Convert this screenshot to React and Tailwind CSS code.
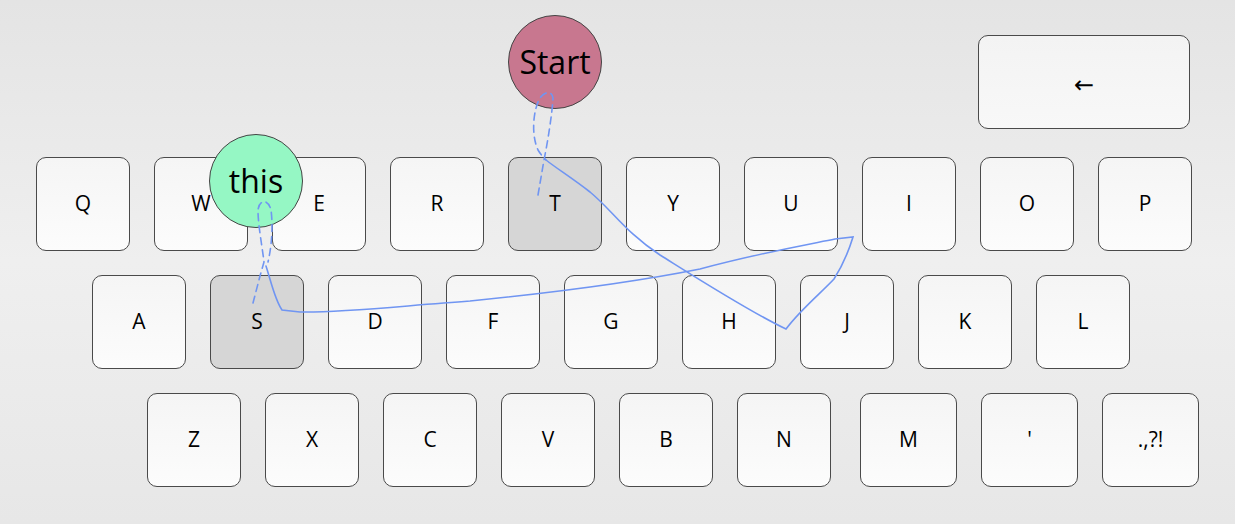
import React from "react";

const rows = [
  { pad: "pl-[36px]", keys: ["Q", "W", "E", "R", "T", "Y", "U", "I", "O", "P"] },
  { pad: "pl-[92px]", keys: ["A", "S", "D", "F", "G", "H", "J", "K", "L"] },
  { pad: "pl-[147px]", keys: ["Z", "X", "C", "V", "B", "N", "M", "'", ".,?!"] },
];

const marked = ["T", "S"];

function Key({ label, wide }) {
  const on = marked.includes(label);
  return (
    <div
      className={`flex h-[94px] items-center justify-center rounded-[10px] border border-[#4a4a4a] text-[21px] text-black ${
        wide ? "w-[97px]" : "w-[94px]"
      } ${on ? "bg-[#d6d6d6]" : "bg-linear-to-b from-[#f5f5f5] to-[#fcfcfc]"}`}
    >
      {label}
    </div>
  );
}

function Trace() {
  return (
    <svg
      className="pointer-events-none absolute left-0 top-0"
      width="1235"
      height="524"
      fill="none"
      stroke="#7095f2"
      strokeWidth="1.6"
      strokeLinecap="round"
    >
      {/* loop from start bubble down to T */}
      <path
        d="M538 195 L544 160 C548 140 552 115 553 98 C552 91 545 91 540 98 C533 110 531 135 538 150 C541 155 544 158 546 160"
        strokeDasharray="7 5"
      />
      {/* main swipe */}
      <path d="M546 160 C556 168 572 178 590 192 C612 210 625 232 660 255 C700 280 750 312 786 329 C800 310 822 292 834 279 C843 265 849 250 853 237 L835 239 C800 246 760 253 700 269 C640 281 560 292 470 301 C400 306 340 313 300 312 L282 310 C275 300 272 285 266 266" />
      {/* loop from S up into this bubble */}
      <path
        d="M253 303 L260 276 L264 262 C262 245 258 225 258 210 C259 200 268 198 271 210 C273 225 272 245 268 262"
        strokeDasharray="7 5"
      />
    </svg>
  );
}

export default function App() {
  return (
    <div
      className="relative h-[524px] w-[1235px] overflow-hidden bg-linear-to-b from-[#e4e4e4] via-[#efefef] to-[#e7e7e7] pt-[35px]"
      style={{ fontFamily: "'Open Sans', 'Noto Sans', sans-serif" }}
    >
      <div className="flex justify-end pr-[45px]">
        <div
          className="flex h-[94px] w-[212px] items-center justify-center rounded-[10px] border border-[#4a4a4a] bg-linear-to-b from-[#f3f3f3] to-[#f8f8f8] pt-[6px] text-[24px] text-black"
          style={{ fontFamily: "'DejaVu Sans', sans-serif" }}
        >
          ←
        </div>
      </div>

      <div className="mt-[28px] flex flex-col gap-[24px]">
        {rows.map((row, i) => (
          <div key={i} className={`flex gap-[24px] ${row.pad}`}>
            {row.keys.map((k, j) => (
              <div key={k} className={i === 2 && j === 6 ? "ml-[5px]" : ""}>
                <Key label={k} wide={i === 2 && j >= 6} />
              </div>
            ))}
          </div>
        ))}
      </div>

      <Bubble className="left-[508px] top-[15px] bg-[#c8778f]" text="Start" />
      <Bubble className="left-[209px] top-[134px] bg-[#95f7c4]" text="this" />

      <Trace />
    </div>
  );
}

function Bubble({ className, text }) {
  return (
    <div
      className={`absolute flex h-[94px] w-[94px] items-center justify-center rounded-full border border-[#444] text-[32px] text-black ${className}`}
    >
      {text}
    </div>
  );
}
